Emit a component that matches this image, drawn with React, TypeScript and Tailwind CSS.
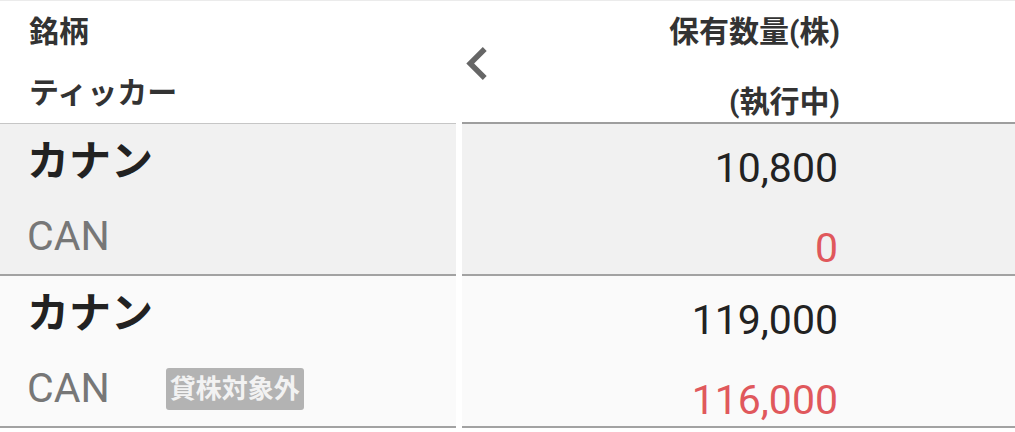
import React from "react";

const FONT = { fontFamily: "Roboto, 'Noto Sans CJK JP', sans-serif" };

function Chevron() {
  return (
    <svg width="21" height="33" viewBox="8 6 7.41 12" className="shrink-0">
      <path d="M15.41 7.41L14 6l-6 6 6 6 1.41-1.41L10.83 12z" fill="#666666" />
    </svg>
  );
}

type Row = { name: string; ticker: string; badge?: string; qty: string; exec: string; bg: string };

const rows: Row[] = [
  { name: "カナン", ticker: "CAN", qty: "10,800", exec: "0", bg: "bg-[#f1f1f1]" },
  { name: "カナン", ticker: "CAN", badge: "貸株対象外", qty: "119,000", exec: "116,000", bg: "bg-[#fafafa]" },
];

export default function App() {
  return (
    <div className="w-[1015px] h-[432px] bg-white overflow-hidden border-t border-[#ebebeb]" style={FONT}>
      <div className="flex">
        {/* left column */}
        <div className="w-[456px] shrink-0">
          <div className="h-[123px] border-b border-[#c6c6c6] pl-[29px] text-[30px] font-bold text-[#333333]">
            <div className="h-[61px] flex items-center">銘柄</div>
            <div className="h-[61px] flex items-center">ティッカー</div>
          </div>
          {rows.map((r, i) => (
            <div key={i} className={`h-[152px] border-b-2 border-[#a2a2a2] ${r.bg} pl-[27px]`}>
              <div className="h-[75px] flex items-center text-[42px] font-bold text-[#222222]">{r.name}</div>
              <div className="h-[75px] flex items-center">
                <span className="text-[41px] text-[#777777] leading-none">{r.ticker}</span>
                {r.badge && (
                  <span className="ml-[56px] bg-[#b3b3b3] text-[#f2f2f2] text-[26px] font-bold leading-[34px] px-[4px] py-[4px] rounded-[3px]">
                    {r.badge}
                  </span>
                )}
              </div>
            </div>
          ))}
        </div>
        {/* gap */}
        <div className="w-[6px] shrink-0" />
        {/* right column */}
        <div className="flex-1">
          <div className="h-[123px] border-b-2 border-[#9e9e9e] flex items-start">
            <div className="ml-[4px] mt-[46px]">
              <Chevron />
            </div>
            <div className="w-[353px] text-right text-[30px] font-bold text-[#333333]">
              <div className="h-[61px] flex items-center justify-end">保有数量(株)</div>
              <div className="h-[60px] pt-[19px] flex items-center justify-end">(執行中)</div>
            </div>
          </div>
          {rows.map((r, i) => (
            <div key={i} className={`h-[152px] border-b-2 border-[#a2a2a2] ${r.bg}`}>
              <div className="w-[376px] text-[41px] text-[#222222] pt-[24px]">
                <div className="h-[40px] leading-[40px] text-right">{r.qty}</div>
                <div className="h-[40px] leading-[40px] text-right mt-[40px] text-[#e0585c]">{r.exec}</div>
              </div>
            </div>
          ))}
        </div>
      </div>
    </div>
  );
}
